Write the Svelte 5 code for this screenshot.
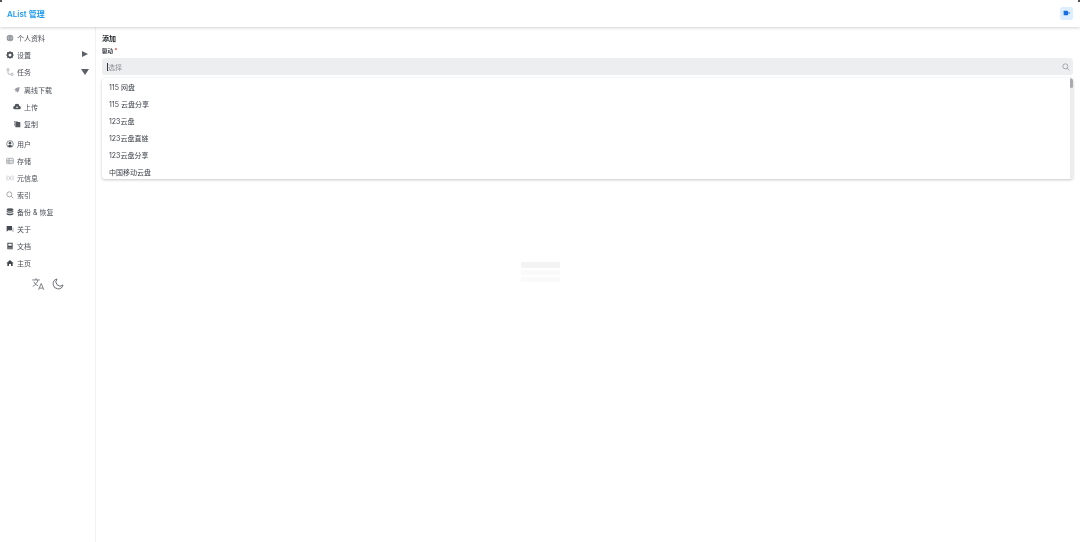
<script lang="ts">
    // Sidebar entries; icon is a key into the icon snippet below
    const topItems = [
        { label: '个人资料', icon: 'globe' },
        { label: '设置', icon: 'gear', arrow: 'right' },
        { label: '任务', icon: 'route', arrow: 'down' }
    ];
    const subItems = [
        { label: '离线下载', icon: 'magnet' },
        { label: '上传', icon: 'cloud' },
        { label: '复制', icon: 'copy' }
    ];
    const restItems = [
        { label: '用户', icon: 'user' },
        { label: '存储', icon: 'storage' },
        { label: '元信息', icon: 'meta' },
        { label: '索引', icon: 'search' },
        { label: '备份 & 恢复', icon: 'db' },
        { label: '关于', icon: 'chat' },
        { label: '文档', icon: 'book' },
        { label: '主页', icon: 'home' }
    ];
    const drivers = ['115 网盘', '115 云盘分享', '123云盘', '123云盘直链', '123云盘分享', '中国移动云盘'];
</script>

{#snippet icon(name)}
    <svg class="icon" viewBox="0 0 24 24" aria-hidden="true">
        {#if name === 'globe'}
            <circle cx="12" cy="12" r="10" fill="#8a8f96" />
            <path d="M2 12h20M12 2c-6 6-6 14 0 20M12 2c6 6 6 14 0 20" stroke="#d5d7da" stroke-width="1.5" fill="none" />
        {:else if name === 'gear'}
            <circle cx="12" cy="12" r="7" fill="none" stroke="#4a5058" stroke-width="5" />
            <path d="M12 1v4M12 19v4M1 12h4M19 12h4M4 4l3 3M17 17l3 3M20 4l-3 3M7 17l-3 3" stroke="#4a5058" stroke-width="3" />
        {:else if name === 'route'}
            <circle cx="6" cy="5" r="3.5" fill="none" stroke="#7d8289" stroke-width="1.6" />
            <circle cx="18" cy="19" r="3.5" fill="none" stroke="#7d8289" stroke-width="1.6" />
            <path d="M6 9v6a4 4 0 0 0 4 4h4" fill="none" stroke="#7d8289" stroke-width="1.6" />
        {:else if name === 'magnet'}
            <path d="M20 3 9 6 4 12l4 1-1 4 4-1 1 4 6-5z" fill="#9a9ea4" />
        {:else if name === 'cloud'}
            <path d="M6 19a5 5 0 0 1-1-10 7 7 0 0 1 14 0 5 5 0 0 1-1 10z" fill="#4f545b" />
            <path d="M12 10l-4 4h8z" fill="#fff" />
        {:else if name === 'copy'}
            <rect x="7" y="6" width="15" height="16" rx="2" fill="#55595f" />
            <path d="M3 3h12v2H5v13H3z" fill="#8a8e94" />
        {:else if name === 'user'}
            <circle cx="12" cy="12" r="10" fill="none" stroke="#4f545b" stroke-width="2" />
            <circle cx="12" cy="9.5" r="4" fill="#4f545b" />
            <path d="M5 19c2-5 12-5 14 0l-3 2H8z" fill="#4f545b" />
        {:else if name === 'storage'}
            <rect x="2" y="4" width="20" height="16" rx="2" fill="none" stroke="#8b8f95" stroke-width="2" />
            <path d="M2 10h20M2 15h20M9 4v16" stroke="#8b8f95" stroke-width="2" />
        {:else if name === 'meta'}
            <path d="M3 5v14M21 5v14M7 5l5 7 5-7M7 19l5-7 5 7" fill="none" stroke="#b4b7bb" stroke-width="2" />
        {:else if name === 'search'}
            <circle cx="10" cy="10" r="7.5" fill="none" stroke="#6f747b" stroke-width="1.8" />
            <path d="M15.5 15.5 22 22" stroke="#6f747b" stroke-width="2" />
        {:else if name === 'db'}
            <ellipse cx="12" cy="5" rx="10" ry="4" fill="#4f545b" />
            <path d="M2 8c3 3 17 3 20 0v4c-3 3-17 3-20 0zM2 15c3 3 17 3 20 0v4c-3 4-17 4-20 0z" fill="#4f545b" />
        {:else if name === 'chat'}
            <path d="M2 3h16v13H7l-5 4z" fill="#44494f" />
            <path d="M20 8h2v13l-4-3H8v-1h12z" fill="#8a8e94" />
        {:else if name === 'book'}
            <path d="M4 2h16v20H6a2 2 0 0 1-2-2zM7 5v6h10V5zM6 17v2h12v-2z" fill="#44494f" fill-rule="evenodd" />
        {:else if name === 'home'}
            <path d="M12 3 1 13h3v8h5v-6h6v6h5v-8h3z" fill="#44494f" />
        {/if}
    </svg>
{/snippet}

{#snippet row(item, sub)}
    <div class="row" class:sub>
        {@render icon(item.icon)}
        <span>{item.label}</span>
        {#if item.arrow}
            <i class="arrow {item.arrow}"></i>
        {/if}
    </div>
{/snippet}

<div class="page">
    <header>
        <div class="logo">AList 管理</div>
        <button class="collapse" aria-label="折叠">
            <svg viewBox="0 0 12 12" width="8" height="8">
                <rect x="1" y="2.500" width="6.500" height="7" rx="1" fill="#1a6fe0" />
                <path d="M7 6h3.500" stroke="#1a6fe0" stroke-width="1.4" />
            </svg>
        </button>
    </header>

    <div class="body">
        <aside>
            {#each topItems as item}
                {@render row(item, false)}
            {/each}
            <div class="subs">
                {#each subItems as item}
                    {@render row(item, true)}
                {/each}
            </div>
            <div class="rest">
                {#each restItems as item}
                    {@render row(item, false)}
                {/each}
            </div>
            <div class="tools">
                <svg viewBox="0 0 24 24" width="14" height="14" fill="none" stroke="#5a5f66" stroke-width="1.3">
                    <path d="M2 5h13M8.500 2v3M12 5c-1 5-5 9-9 11M5 8c1 3 4 6 7 7M13 22l4.500-11L22 22M14.500 19h6" />
                </svg>
                <svg viewBox="0 0 24 24" width="12" height="12" fill="none" stroke="#5a5f66" stroke-width="1.8">
                    <path d="M10 2a10 10 0 1 0 12 12A8.500 8.500 0 0 1 10 2z" />
                </svg>
            </div>
        </aside>

        <main>
            <h1>添加</h1>
            <div class="label">驱动 <em>*</em></div>
            <div class="select">
                <i class="caret"></i><span>选择</span>
                <svg class="glass" viewBox="0 0 24 24" fill="none" stroke="#777c83" stroke-width="1.8">
                    <circle cx="10" cy="10" r="7.500" />
                    <path d="M15.500 15.500 22 22" />
                </svg>
            </div>
            <div class="listbox">
                <div class="options">
                    {#each drivers as name}
                        <div class="option">{name}</div>
                    {/each}
                </div>
                <div class="track"><i class="thumb"></i></div>
            </div>
            <div class="mark" aria-hidden="true">
                <b></b><b></b><b></b>
            </div>
        </main>
    </div>

    <i class="corner left"></i>
    <i class="corner right"></i>
</div>

<style>
    :global(body) {
        margin: 0;
        background: #fff;
    }

    .page {
        height: 542px;
        display: flex;
        flex-direction: column;
        overflow: hidden;
        position: relative;
        font-family: Inter, "Noto Sans CJK SC", sans-serif;
        color: #4a4f56;
        filter: blur(0.3px);
    }

    header {
        height: 27px;
        flex: none;
        display: flex;
        align-items: center;
        justify-content: space-between;
        padding: 0 7px 1px;
        box-sizing: border-box;
        box-shadow: 0 1px 3px rgba(0, 0, 0, 0.18);
        position: relative;
    }

    .logo {
        font-size: 8px;
        font-weight: 600;
        color: #1e9cf0;
    }

    .collapse {
        width: 13px;
        height: 13px;
        padding: 0;
        border: 0;
        border-radius: 3px;
        background: #dceeff;
        display: flex;
        align-items: center;
        justify-content: center;
    }

    .corner {
        position: absolute;
        top: 0;
        width: 2px;
        height: 2px;
        background: #555;
    }

    .corner.left {
        left: 0;
    }

    .corner.right {
        right: 0;
    }

    .body {
        flex: 1;
        display: flex;
    }

    aside {
        width: 95px;
        flex: none;
        border-right: 1px solid #f1f2f3;
        padding-top: 2px;
    }

    .row {
        height: 17px;
        display: flex;
        align-items: center;
        gap: 3px;
        padding-left: 6px;
        font-size: 7px;
        position: relative;
    }

    .row.sub {
        padding-left: 13px;
    }

    .subs {
        margin-top: 1px;
    }

    .icon {
        width: 8px;
        height: 8px;
        flex: none;
    }

    .arrow {
        position: absolute;
        width: 0;
        height: 0;
    }

    .arrow.right {
        left: 82px;
        top: 5px;
        border-left: 6px solid #5c6168;
        border-top: 3.5px solid transparent;
        border-bottom: 3.5px solid transparent;
    }

    .arrow.down {
        left: 81px;
        top: 6px;
        border-top: 6px solid #5c6168;
        border-left: 4px solid transparent;
        border-right: 4px solid transparent;
    }

    .rest {
        margin-top: 4px;
    }

    .rest .row {
        height: 16.9px;
    }

    .tools {
        display: flex;
        justify-content: center;
        align-items: center;
        gap: 7px;
        padding: 6px 0 0 0;
    }

    main {
        flex: 1;
        position: relative;
        padding: 7px 7px 0 6px;
    }

    h1 {
        margin: 0;
        font-size: 7px;
        line-height: 9px;
        font-weight: 700;
        color: #1c2025;
    }

    .label {
        margin-top: 4px;
        font-size: 5.5px;
        line-height: 9px;
        font-weight: 600;
        color: #33383f;
    }

    .label em {
        font-style: normal;
        color: #e5484d;
    }

    .select {
        margin-top: 2px;
        height: 17px;
        display: flex;
        align-items: center;
        padding: 0 3px 0 5px;
        border-radius: 3px;
        background: #edeef0;
        font-size: 7px;
        color: #8c9096;
    }

    .caret {
        width: 1px;
        height: 8px;
        background: #33383f;
    }

    .glass {
        width: 8px;
        height: 8px;
        margin-left: auto;
    }

    .listbox {
        position: relative;
        margin-top: 3px;
        height: 101px;
        overflow: hidden;
        border-radius: 3px;
        background: #fff;
        box-shadow: 0 1px 3px rgba(0, 0, 0, 0.22);
    }

    .options {
        padding: 1px 0 0 7px;
    }

    .option {
        height: 17px;
        line-height: 17px;
        font-size: 7px;
        color: #3c4148;
    }

    .track {
        position: absolute;
        top: 0;
        right: 0;
        bottom: 0;
        width: 3px;
        background: #ededed;
    }

    .thumb {
        display: block;
        width: 3px;
        height: 10px;
        border-radius: 2px;
        background: #a9abae;
    }

    .mark {
        position: absolute;
        left: 425px;
        top: 235px;
        display: flex;
        flex-direction: column;
        gap: 2px;
    }

    .mark b {
        display: block;
        width: 39px;
        height: 5px;
        background: #fafafa;
    }

    .mark b:first-child {
        height: 6px;
        background: #f3f3f4;
    }
</style>
